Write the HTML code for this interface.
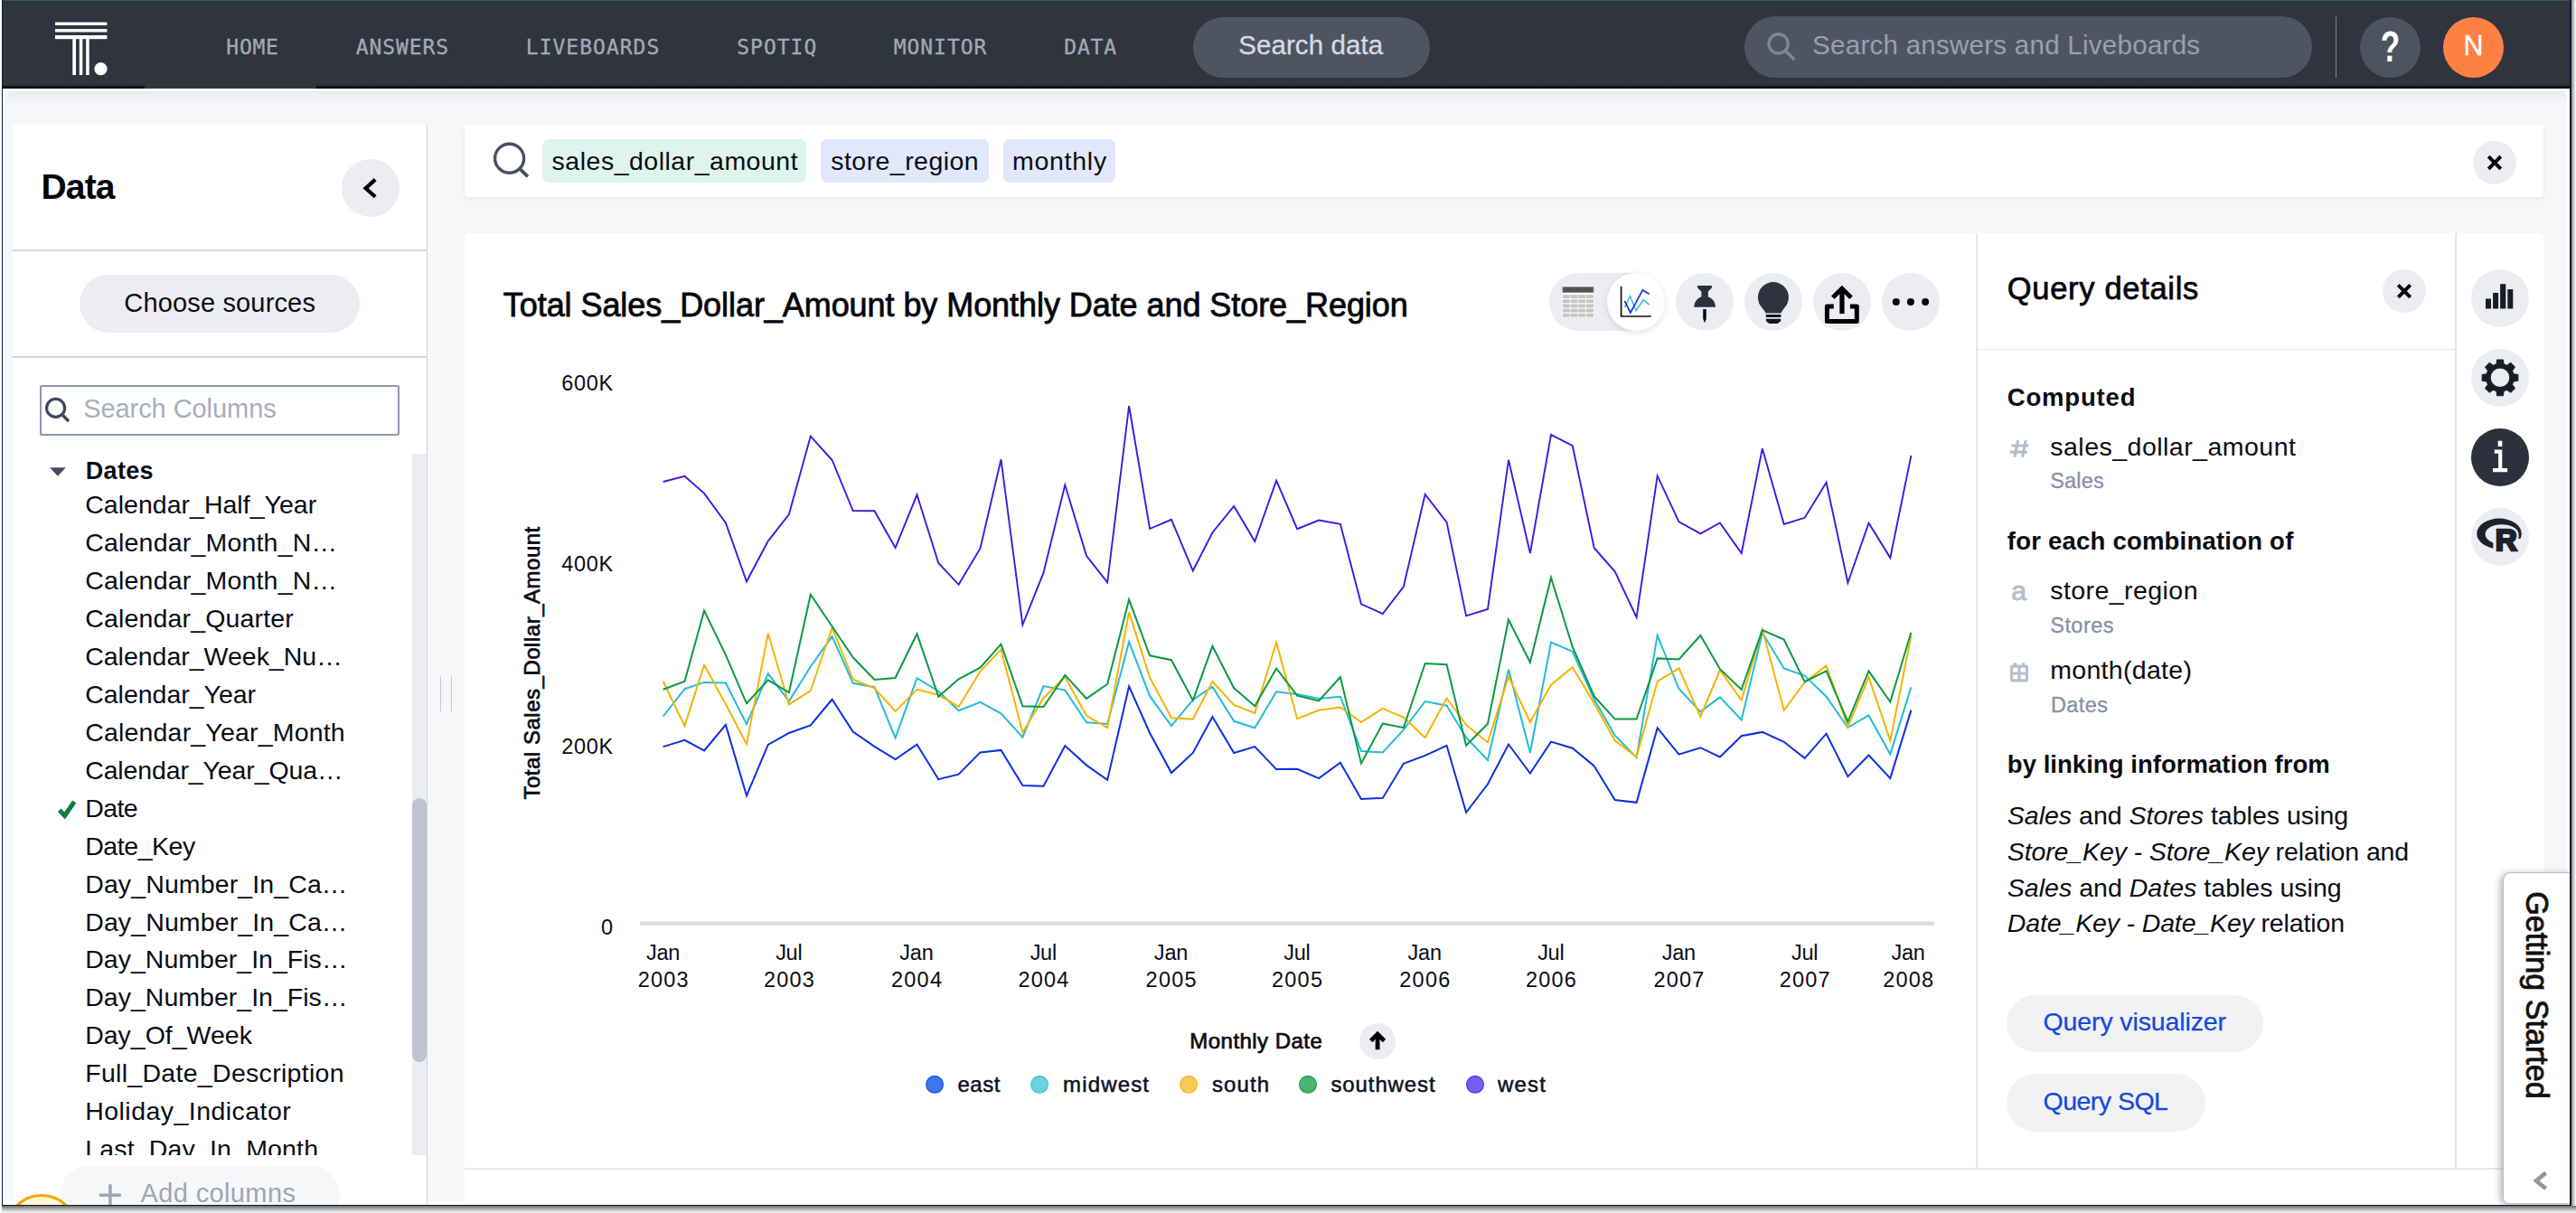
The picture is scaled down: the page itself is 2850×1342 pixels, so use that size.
<!DOCTYPE html>
<html lang="en">
<head>
<meta charset="utf-8">
<title>ThoughtSpot – Search data</title>
<style>
html,body{margin:0;padding:0;background:#fff;}
html{width:2850px;height:1342px;overflow:hidden;}
#root{position:absolute;left:0;top:0;width:2850px;height:1342px;overflow:hidden;background:#fff;}
body{width:2850px;height:1342px;position:relative;overflow:hidden;font-family:"Liberation Sans",Arial,sans-serif;}
.abs,.tx,.c{position:absolute;}
.tx{white-space:pre;line-height:1;}
.c{border-radius:50%;background:#ecedf2;}
#win{left:2px;top:0;width:2841px;height:1333px;background:#fff;border-left:1px solid #0c1a33;border-right:1.5px solid #0c1a33;border-bottom:1.5px solid #0c1a33;box-shadow:1px 3px 7px rgba(0,0,0,.75);overflow:hidden;box-sizing:content-box;}
#nav{left:3px;top:0;width:2841px;height:98px;background:#30343f;}
#navtop{left:3px;top:0;width:2841px;height:1px;background:#3a5262;}
.navline{top:94.2px;height:3.8px;background:linear-gradient(#30343f,#05060c 70%,#000);}
#navshadow{left:6px;top:100.8px;width:2834px;height:16px;border-radius:7px 7px 0 0;background:linear-gradient(#e9eaed,#f1f2f5 40%,#f6f7f9);}
.pill{border-radius:34px;background:#4f5463;}
.card{background:#fff;}
.ln{background:#e4e6ee;}
.btn{background:#ecedf2;border-radius:32px;}
#listclip{left:0;top:0;width:480px;height:1277.6px;overflow:hidden;}
i{font-style:italic;}
</style>
</head>
<body>
<div id="root">
<div id="win" class="abs"></div>

<!-- ======= top navigation ======= -->
<div class="abs" style="left:6px;top:100.8px;width:2834px;height:1229.5px;background:#f6f7f9;border-radius:7px"></div>
<div id="navshadow" class="abs"></div>
<div class="abs" style="left:3px;top:98px;width:2841px;height:2.8px;background:#fff"></div>
<div id="nav" class="abs"></div>
<div id="navtop" class="abs"></div>
<div class="abs navline" style="left:3px;width:157px"></div>
<div class="abs navline" style="left:350px;width:2494px"></div>
<svg class="abs" style="left:0;top:0" width="200" height="98" viewBox="0 0 200 98">
  <g fill="#fff">
    <rect x="61" y="24.6" width="57.4" height="3.4"/>
    <rect x="61" y="32.1" width="57.4" height="3.4"/>
    <rect x="61" y="39" width="57.4" height="4.2"/>
    <rect x="80.3" y="43" width="3.7" height="40"/>
    <rect x="87.8" y="43" width="3.5" height="40"/>
    <rect x="95.1" y="43" width="3.6" height="40"/>
    <circle cx="111.5" cy="76.2" r="7.1"/>
  </g>
</svg>
<div class="abs pill" style="left:1319.7px;top:18.9px;width:262.5px;height:66.9px"></div>
<div class="abs pill" style="left:1929.5px;top:18.4px;width:628.8px;height:67.5px"></div>
<svg class="abs" style="left:1940px;top:25px" width="60" height="60" viewBox="1940 25 60 60">
  <circle cx="1967.6" cy="48.4" r="10.6" fill="none" stroke="#7f8596" stroke-width="3.4"/>
  <line x1="1975.6" y1="56.4" x2="1985.4" y2="66" stroke="#7f8596" stroke-width="3.6"/>
</svg>
<div class="abs" style="left:2583.6px;top:18.4px;width:1.8px;height:67.6px;background:#87817c"></div>
<div class="abs c" style="left:2611px;top:18.9px;width:67px;height:67px;background:#4e5362"></div>
<span class="tx" style="left:2630px;top:28px;width:29px;text-align:center;font-size:47.5px;font-weight:700;color:#fff;transform:scaleX(.74);transform-origin:50% 50%">?</span>
<div class="abs c" style="left:2703px;top:18.9px;width:67px;height:67px;background:#ff8142"></div>

<!-- ======= left data panel ======= -->
<div class="abs card" style="left:14px;top:138px;width:458px;height:1195px;border-radius:4px 0 0 0;border-right:1.5px solid #cfd3de"></div>
<div class="abs c" style="left:378px;top:176px;width:64px;height:64px"></div>
<svg class="abs" style="left:378px;top:176px" width="64" height="64" viewBox="378 176 64 64"><polyline points="415.2,198.6 404.6,208.2 415.2,217.8" fill="none" stroke="#000" stroke-width="4.2"/></svg>
<div class="abs" style="left:14px;top:276px;width:458px;height:1.6px;background:#d3d8e6"></div>
<div class="abs btn" style="left:88px;top:304px;width:310px;height:64px"></div>
<div class="abs" style="left:14px;top:394px;width:458px;height:1.6px;background:#d3d8e6"></div>
<div class="abs" style="left:44.4px;top:426px;width:397.6px;height:55.6px;box-sizing:border-box;border:2.4px solid #8d96aa;background:#fff;border-radius:2px"></div>
<svg class="abs" style="left:46px;top:432px" width="40" height="44" viewBox="46 432 40 44">
  <circle cx="61.6" cy="451.4" r="10" fill="none" stroke="#3f4759" stroke-width="3.2"/>
  <line x1="69" y1="459" x2="76" y2="466" stroke="#3f4759" stroke-width="3.4"/>
</svg>
<svg class="abs" style="left:50px;top:510px" width="40" height="24" viewBox="50 510 40 24"><polygon points="55,517.2 72.8,517.2 63.9,526.7" fill="#454d5f"/></svg>
<div class="abs" style="left:456px;top:502px;width:16px;height:775.6px;background:#ecedf2"></div>
<div class="abs" style="left:456.3px;top:882.8px;width:15.9px;height:292.2px;background:#bfc4d1;border-radius:8px"></div>
<div id="listclip" class="abs">
<span class='tx' style='font-family:"Liberation Sans", Arial, sans-serif;font-size:28.5px;font-weight:400;font-style:normal;color:#0b0c14;letter-spacing:0.022px;left:94.2px;top:544.0px;'>Calendar_Half_Year</span>
<span class='tx' style='font-family:"Liberation Sans", Arial, sans-serif;font-size:28.5px;font-weight:400;font-style:normal;color:#0b0c14;letter-spacing:0.196px;left:94.2px;top:586.0px;'>Calendar_Month_N…</span>
<span class='tx' style='font-family:"Liberation Sans", Arial, sans-serif;font-size:28.5px;font-weight:400;font-style:normal;color:#0b0c14;letter-spacing:0.196px;left:94.2px;top:627.9px;'>Calendar_Month_N…</span>
<span class='tx' style='font-family:"Liberation Sans", Arial, sans-serif;font-size:28.5px;font-weight:400;font-style:normal;color:#0b0c14;letter-spacing:0.164px;left:94.2px;top:669.9px;'>Calendar_Quarter</span>
<span class='tx' style='font-family:"Liberation Sans", Arial, sans-serif;font-size:28.5px;font-weight:400;font-style:normal;color:#0b0c14;letter-spacing:-0.008px;left:94.2px;top:711.8px;'>Calendar_Week_Nu…</span>
<span class='tx' style='font-family:"Liberation Sans", Arial, sans-serif;font-size:28.5px;font-weight:400;font-style:normal;color:#0b0c14;letter-spacing:-0.016px;left:94.2px;top:753.8px;'>Calendar_Year</span>
<span class='tx' style='font-family:"Liberation Sans", Arial, sans-serif;font-size:28.5px;font-weight:400;font-style:normal;color:#0b0c14;letter-spacing:0.186px;left:94.2px;top:795.7px;'>Calendar_Year_Month</span>
<span class='tx' style='font-family:"Liberation Sans", Arial, sans-serif;font-size:28.5px;font-weight:400;font-style:normal;color:#0b0c14;letter-spacing:-0.124px;left:94.2px;top:837.7px;'>Calendar_Year_Qua…</span>
<span class='tx' style='font-family:"Liberation Sans", Arial, sans-serif;font-size:28.5px;font-weight:400;font-style:normal;color:#0b0c14;letter-spacing:-0.601px;left:94.2px;top:879.6px;'>Date</span>
<span class='tx' style='font-family:"Liberation Sans", Arial, sans-serif;font-size:28.5px;font-weight:400;font-style:normal;color:#0b0c14;letter-spacing:-0.439px;left:94.2px;top:921.5px;'>Date_Key</span>
<span class='tx' style='font-family:"Liberation Sans", Arial, sans-serif;font-size:28.5px;font-weight:400;font-style:normal;color:#0b0c14;letter-spacing:0.118px;left:94.2px;top:963.5px;'>Day_Number_In_Ca…</span>
<span class='tx' style='font-family:"Liberation Sans", Arial, sans-serif;font-size:28.5px;font-weight:400;font-style:normal;color:#0b0c14;letter-spacing:0.118px;left:94.2px;top:1005.5px;'>Day_Number_In_Ca…</span>
<span class='tx' style='font-family:"Liberation Sans", Arial, sans-serif;font-size:28.5px;font-weight:400;font-style:normal;color:#0b0c14;letter-spacing:0.020px;left:94.2px;top:1047.4px;'>Day_Number_In_Fis…</span>
<span class='tx' style='font-family:"Liberation Sans", Arial, sans-serif;font-size:28.5px;font-weight:400;font-style:normal;color:#0b0c14;letter-spacing:0.020px;left:94.2px;top:1089.3px;'>Day_Number_In_Fis…</span>
<span class='tx' style='font-family:"Liberation Sans", Arial, sans-serif;font-size:28.5px;font-weight:400;font-style:normal;color:#0b0c14;letter-spacing:-0.011px;left:94.2px;top:1131.3px;'>Day_Of_Week</span>
<span class='tx' style='font-family:"Liberation Sans", Arial, sans-serif;font-size:28.5px;font-weight:400;font-style:normal;color:#0b0c14;letter-spacing:0.300px;left:94.2px;top:1173.2px;'>Full_Date_Description</span>
<span class='tx' style='font-family:"Liberation Sans", Arial, sans-serif;font-size:28.5px;font-weight:400;font-style:normal;color:#0b0c14;letter-spacing:0.461px;left:94.2px;top:1215.2px;'>Holiday_Indicator</span>
<span class='tx' style='font-family:"Liberation Sans", Arial, sans-serif;font-size:28.5px;font-weight:400;font-style:normal;color:#0b0c14;letter-spacing:0.175px;left:94.2px;top:1257.2px;'>Last_Day_In_Month</span>
</div>
<svg class="abs" style="left:60px;top:880px" width="30" height="30" viewBox="60 880 30 30"><polyline points="65.8,896.2 71.6,902.4 82.2,887" fill="none" stroke="#0f7d3c" stroke-width="5"/></svg>
<div class="abs" style="left:66px;top:1290px;width:309.5px;height:64px;border-radius:32px;background:#f6f7f9"></div>
<svg class="abs" style="left:100px;top:1300px" width="50" height="33" viewBox="100 1300 50 33"><path d="M109.9 1322.2H133.9M121.9 1310.2V1334" stroke="#9fa5b2" stroke-width="3.6" fill="none"/></svg>
<div class="abs" style="left:5.8px;top:1321.4px;width:80px;height:80px;box-sizing:border-box;border-radius:50%;border:3px solid #f5a300;background:#fff8d4"></div>
<div class="abs" style="left:486.5px;top:747.8px;width:1.2px;height:39.4px;background:#c3c7d2"></div>
<div class="abs" style="left:498.7px;top:747.8px;width:1.2px;height:39.4px;background:#c3c7d2"></div>

<!-- ======= search bar ======= -->
<div class="abs card" style="left:514px;top:138px;width:2299.5px;height:79.8px;border-radius:4px;box-shadow:0 2px 5px rgba(20,30,60,.06)"></div>
<svg class="abs" style="left:540px;top:150px" width="56" height="56" viewBox="540 150 56 56">
  <circle cx="563.6" cy="175.2" r="16" fill="none" stroke="#475063" stroke-width="3.4"/>
  <line x1="575.2" y1="186.8" x2="584" y2="195.4" stroke="#475063" stroke-width="3.8"/>
</svg>
<div class="abs" style="left:600px;top:154.2px;width:291.9px;height:47.5px;border-radius:7px;background:#def5ec"></div>
<div class="abs" style="left:908px;top:154.2px;width:185.8px;height:47.5px;border-radius:7px;background:#e1e8fb"></div>
<div class="abs" style="left:1110.2px;top:154.2px;width:123.7px;height:47.5px;border-radius:7px;background:#e1e8fb"></div>
<div class="abs c" style="left:2735.8px;top:155.8px;width:48px;height:48px"></div>
<svg class="abs" style="left:2735.8px;top:155.8px" width="48" height="48" viewBox="0 0 48 48"><path d="M17.2 17.2L30.8 30.8M30.8 17.2L17.2 30.8" stroke="#000" stroke-width="4" fill="none"/></svg>

<!-- ======= answer card ======= -->
<div class="abs card" style="left:514px;top:258px;width:2299.5px;height:1075px;border-radius:4px 4px 0 0"></div>
<div class="abs ln" style="left:2186.3px;top:258px;width:1.6px;height:1035px"></div>
<div class="abs ln" style="left:2716.2px;top:258px;width:1.6px;height:1035px"></div>
<div class="abs ln" style="left:2187px;top:385.8px;width:530px;height:1.6px"></div>
<div class="abs ln" style="left:514px;top:1292px;width:2299.5px;height:1.6px"></div>

<!-- view toggle + actions -->
<div class="abs btn" style="left:1714px;top:302px;width:127px;height:64px"></div>
<div class="abs c" style="left:1777.8px;top:302px;width:64px;height:64px;background:#fff;box-shadow:0 2px 7px rgba(60,70,100,.16)"></div>
<div class="abs c" style="left:1853.9px;top:302px;width:64px;height:64px"></div>
<div class="abs c" style="left:1930px;top:302px;width:64px;height:64px"></div>
<div class="abs c" style="left:2005.8px;top:302px;width:64px;height:64px"></div>
<div class="abs c" style="left:2081.9px;top:302px;width:64px;height:64px"></div>
<svg class="abs" style="left:1714px;top:302px" width="440" height="64" viewBox="1714 302 440 64">
  <!-- table icon -->
  <rect x="1728.2" y="316.2" width="35.5" height="35" fill="#fff" opacity=".9"/>
  <rect x="1728.9" y="317.4" width="34.1" height="6.2" fill="#545454" stroke="#8a8a8a" stroke-width=".8"/>
  <g fill="#c5c4c2">
    <rect x="1728.9" y="326.2" width="7.9" height="3.9"/><rect x="1737.6" y="326.2" width="7.9" height="3.9"/><rect x="1746.3" y="326.2" width="7.9" height="3.9"/><rect x="1755" y="326.2" width="8" height="3.9"/>
    <rect x="1728.9" y="331.35" width="7.9" height="3.9"/><rect x="1737.6" y="331.35" width="7.9" height="3.9"/><rect x="1746.3" y="331.35" width="7.9" height="3.9"/><rect x="1755" y="331.35" width="8" height="3.9"/>
    <rect x="1728.9" y="336.5" width="7.9" height="3.9"/><rect x="1737.6" y="336.5" width="7.9" height="3.9"/><rect x="1746.3" y="336.5" width="7.9" height="3.9"/><rect x="1755" y="336.5" width="8" height="3.9"/>
    <rect x="1728.9" y="341.65" width="7.9" height="3.9"/><rect x="1737.6" y="341.65" width="7.9" height="3.9"/><rect x="1746.3" y="341.65" width="7.9" height="3.9"/><rect x="1755" y="341.65" width="8" height="3.9"/>
    <rect x="1728.9" y="346.8" width="7.9" height="3.9"/><rect x="1737.6" y="346.8" width="7.9" height="3.9"/><rect x="1746.3" y="346.8" width="7.9" height="3.9"/><rect x="1755" y="346.8" width="8" height="3.9"/>
  </g>
  <!-- line chart icon -->
  <path d="M1793.6 317V350H1826.8" fill="none" stroke="#0a0c1c" stroke-width="1.7"/>
  <polyline points="1797.4,340 1803.5,327.8 1810,343.7 1818.3,331.7 1824.6,337.2" fill="none" stroke="#2cc4d8" stroke-width="1.6"/>
  <polyline points="1797.4,332.8 1803.9,345.9 1817.4,320.9 1824.6,325.2" fill="none" stroke="#1230e0" stroke-width="1.7"/>
  <!-- pin -->
  <g fill="#2b2f3b">
    <path d="M1877.9 316H1894V317.6C1893.4 320.6 1889.8 321 1889.8 323.8V328.2A11.9 12.2 0 0 1 1898 339.7H1874.2A11.9 12.2 0 0 1 1882.4 328.2V323.8C1882.4 321 1878.5 320.6 1877.9 317.6Z"/>
    <path fill="#0c0d14" d="M1884.2 341.9H1887.8V352.7L1886 357.2L1884.2 352.7Z"/>
  </g>
  <!-- bulb -->
  <g fill="#2f3340">
    <circle cx="1961.9" cy="329.1" r="17"/>
    <path d="M1949.6 340H1974.2L1970.3 346.5H1953.6Z"/>
    <rect fill="#14161f" x="1953.7" y="348.1" width="16.7" height="3" rx=".5"/>
    <path fill="#14161f" d="M1953.9 352.7H1970.2V355.3L1966.6 358H1957.4L1953.9 355.3Z"/>
  </g>
  <!-- share -->
  <g fill="none" stroke="#000">
    <path d="M2028.8 339.1H2021.4V355.6H2054.3V339.1H2046.9" stroke-width="5" stroke-linejoin="round"/>
    <path d="M2037.95 347.1V319.5" stroke-width="5.3"/>
    <path d="M2027.75 329.25L2037.9 319.2L2048.05 329.25" stroke-width="5" stroke-linejoin="miter"/>
  </g>
  <!-- more -->
  <g fill="#05060e"><circle cx="2097.8" cy="334.1" r="4"/><circle cx="2113.9" cy="334.1" r="4"/><circle cx="2130.1" cy="334.1" r="4"/></g>
</svg>

<!-- chart -->
<svg class="abs" style="left:514px;top:390px" width="1672" height="880" viewBox="514 390 1672 880">
<rect x="708" y="1019.5" width="1432.2" height="4.3" fill="#dcdcdc"/><polyline points="733.7,826.1 757.5,818.8 779.1,830.4 802.9,801.9 826.0,880.4 849.8,823.9 872.9,811.0 896.8,802.5 920.6,773.8 943.7,809.6 967.5,825.9 990.6,840.1 1014.5,823.7 1038.3,862.2 1060.6,856.6 1084.5,832.4 1107.5,829.9 1131.4,869.1 1154.5,869.8 1178.3,825.0 1202.1,846.6 1225.2,862.9 1249.1,759.3 1272.1,811.0 1296.0,855.1 1319.8,833.0 1341.4,793.0 1365.2,833.0 1388.3,826.1 1412.1,851.1 1435.2,850.8 1459.1,861.1 1482.9,843.7 1506.0,884.0 1529.8,882.9 1552.9,844.8 1576.7,835.9 1600.6,824.8 1622.1,898.9 1646.0,867.5 1669.0,823.5 1692.9,855.5 1716.0,820.6 1739.8,827.7 1763.7,847.5 1786.7,885.1 1810.6,887.8 1833.7,805.4 1857.5,834.6 1881.3,827.2 1902.9,837.5 1926.7,814.3 1949.8,809.9 1973.7,820.8 1996.7,838.8 2020.6,811.7 2044.4,859.1 2067.5,835.5 2091.3,861.1 2114.4,785.6" fill="none" stroke="#0b2fe3" stroke-width="2.0" stroke-linejoin="miter" stroke-linecap="butt"/><polyline points="733.7,792.5 757.5,762.2 779.1,754.9 802.9,755.5 826.0,801.2 849.8,745.3 872.9,775.8 896.8,737.5 920.6,704.1 943.7,755.8 967.5,760.2 990.6,816.5 1014.5,750.2 1038.3,764.7 1060.6,786.3 1084.5,776.9 1107.5,789.4 1131.4,815.7 1154.5,759.1 1178.3,763.6 1202.1,799.2 1225.2,801.0 1249.1,710.1 1272.1,770.2 1296.0,803.2 1319.8,774.2 1341.4,759.8 1365.2,797.8 1388.3,805.2 1412.1,765.3 1435.2,768.0 1459.1,773.1 1482.9,770.7 1506.0,831.0 1529.8,832.4 1552.9,807.4 1576.7,776.0 1600.6,780.7 1622.1,815.9 1646.0,841.0 1669.0,740.6 1692.9,832.8 1716.0,710.6 1739.8,720.8 1763.7,773.6 1786.7,813.7 1810.6,838.1 1833.7,703.0 1857.5,762.0 1881.3,787.4 1902.9,771.4 1926.7,796.5 1949.8,700.1 1973.7,739.5 1996.7,747.5 2020.6,770.7 2044.4,805.0 2067.5,791.4 2091.3,834.4 2114.4,760.2" fill="none" stroke="#21bcd8" stroke-width="2.0" stroke-linejoin="miter" stroke-linecap="butt"/><polyline points="733.7,753.8 757.5,803.2 779.1,735.7 802.9,779.1 826.0,823.2 849.8,700.8 872.9,779.4 896.8,764.2 920.6,694.5 943.7,751.8 967.5,761.3 990.6,786.9 1014.5,762.9 1038.3,768.7 1060.6,781.8 1084.5,742.9 1107.5,718.4 1131.4,810.3 1154.5,772.2 1178.3,749.1 1202.1,791.8 1225.2,805.2 1249.1,677.4 1272.1,749.5 1296.0,794.3 1319.8,795.6 1341.4,754.0 1365.2,780.0 1388.3,788.9 1412.1,710.8 1435.2,795.2 1459.1,785.8 1482.9,782.5 1506.0,799.0 1529.8,783.8 1552.9,793.6 1576.7,816.1 1600.6,772.5 1622.1,801.9 1646.0,821.4 1669.0,748.4 1692.9,799.0 1716.0,757.6 1739.8,738.2 1763.7,778.0 1786.7,819.4 1810.6,837.3 1833.7,754.0 1857.5,739.3 1881.3,793.0 1902.9,741.3 1926.7,774.7 1949.8,696.1 1973.7,785.8 1996.7,754.7 2020.6,736.6 2044.4,804.1 2067.5,749.1 2091.3,819.4 2114.4,703.4" fill="none" stroke="#f5b400" stroke-width="2.0" stroke-linejoin="miter" stroke-linecap="butt"/><polyline points="733.7,762.7 757.5,753.8 779.1,675.6 802.9,724.6 826.0,778.3 849.8,752.4 872.9,766.2 896.8,657.8 920.6,693.0 943.7,727.3 967.5,752.0 990.6,750.0 1014.5,701.2 1038.3,770.7 1060.6,751.3 1084.5,738.6 1107.5,712.6 1131.4,781.2 1154.5,782.0 1178.3,746.9 1202.1,772.9 1225.2,756.7 1249.1,663.4 1272.1,725.3 1296.0,730.2 1319.8,774.9 1341.4,714.8 1365.2,761.3 1388.3,781.2 1412.1,739.5 1435.2,769.6 1459.1,775.4 1482.9,749.1 1506.0,844.4 1529.8,800.5 1552.9,805.2 1576.7,734.0 1600.6,735.3 1622.1,824.8 1646.0,800.7 1669.0,685.6 1692.9,732.8 1716.0,639.0 1739.8,715.7 1763.7,770.2 1786.7,795.6 1810.6,795.6 1833.7,728.4 1857.5,729.5 1881.3,703.0 1902.9,740.2 1926.7,762.9 1949.8,697.2 1973.7,707.5 1996.7,754.2 2020.6,742.4 2044.4,798.5 2067.5,742.4 2091.3,776.5 2114.4,699.7" fill="none" stroke="#0a9a43" stroke-width="2.0" stroke-linejoin="miter" stroke-linecap="butt"/><polyline points="733.7,533.0 757.5,526.9 779.1,545.9 802.9,578.5 826.0,643.3 849.8,598.6 872.9,569.0 896.8,482.6 920.6,509.0 943.7,565.0 967.5,565.2 990.6,606.0 1014.5,547.4 1038.3,623.0 1060.6,646.8 1084.5,606.7 1107.5,508.3 1131.4,691.3 1154.5,633.7 1178.3,536.5 1202.1,615.1 1225.2,644.3 1249.1,449.0 1272.1,585.0 1296.0,574.8 1319.8,631.5 1341.4,589.2 1365.2,560.0 1388.3,599.0 1412.1,531.6 1435.2,585.2 1459.1,575.6 1482.9,579.8 1506.0,668.3 1529.8,679.0 1552.9,649.0 1576.7,546.9 1600.6,577.8 1622.1,681.4 1646.0,674.0 1669.0,508.8 1692.9,612.0 1716.0,480.9 1739.8,493.2 1763.7,606.2 1786.7,632.4 1810.6,682.9 1833.7,526.4 1857.5,577.3 1881.3,590.4 1902.9,578.5 1926.7,612.1 1949.8,496.2 1973.7,580.0 1996.7,572.8 2020.6,533.8 2044.4,644.8 2067.5,578.8 2091.3,617.1 2114.4,503.9" fill="none" stroke="#4316e6" stroke-width="1.9" stroke-linejoin="miter" stroke-linecap="butt"/><text x="678.2" y="432" text-anchor="end" font-size="23.5" fill="#0b0c14" style="font-family:&quot;Liberation Sans&quot;,Arial,sans-serif;" textLength="57" lengthAdjust="spacing">600K</text><text x="678.2" y="632" text-anchor="end" font-size="23.5" fill="#0b0c14" style="font-family:&quot;Liberation Sans&quot;,Arial,sans-serif;" textLength="57" lengthAdjust="spacing">400K</text><text x="678.2" y="833.5" text-anchor="end" font-size="23.5" fill="#0b0c14" style="font-family:&quot;Liberation Sans&quot;,Arial,sans-serif;" textLength="57" lengthAdjust="spacing">200K</text><text x="678.2" y="1033.5" text-anchor="end" font-size="23.5" fill="#0b0c14" style="font-family:&quot;Liberation Sans&quot;,Arial,sans-serif;">0</text><text x="733.7" y="1061.9" text-anchor="middle" font-size="23.5" fill="#0b0c14" style="font-family:&quot;Liberation Sans&quot;,Arial,sans-serif;" textLength="37.5" lengthAdjust="spacing">Jan</text><text x="733.7" y="1092.1" text-anchor="middle" font-size="23.5" fill="#0b0c14" style="font-family:&quot;Liberation Sans&quot;,Arial,sans-serif;" textLength="56" lengthAdjust="spacing">2003</text><text x="872.9" y="1061.9" text-anchor="middle" font-size="23.5" fill="#0b0c14" style="font-family:&quot;Liberation Sans&quot;,Arial,sans-serif;" textLength="29.5" lengthAdjust="spacing">Jul</text><text x="872.9" y="1092.1" text-anchor="middle" font-size="23.5" fill="#0b0c14" style="font-family:&quot;Liberation Sans&quot;,Arial,sans-serif;" textLength="56" lengthAdjust="spacing">2003</text><text x="1014" y="1061.9" text-anchor="middle" font-size="23.5" fill="#0b0c14" style="font-family:&quot;Liberation Sans&quot;,Arial,sans-serif;" textLength="37.5" lengthAdjust="spacing">Jan</text><text x="1014" y="1092.1" text-anchor="middle" font-size="23.5" fill="#0b0c14" style="font-family:&quot;Liberation Sans&quot;,Arial,sans-serif;" textLength="56" lengthAdjust="spacing">2004</text><text x="1154.4" y="1061.9" text-anchor="middle" font-size="23.5" fill="#0b0c14" style="font-family:&quot;Liberation Sans&quot;,Arial,sans-serif;" textLength="29.5" lengthAdjust="spacing">Jul</text><text x="1154.4" y="1092.1" text-anchor="middle" font-size="23.5" fill="#0b0c14" style="font-family:&quot;Liberation Sans&quot;,Arial,sans-serif;" textLength="56" lengthAdjust="spacing">2004</text><text x="1295.6" y="1061.9" text-anchor="middle" font-size="23.5" fill="#0b0c14" style="font-family:&quot;Liberation Sans&quot;,Arial,sans-serif;" textLength="37.5" lengthAdjust="spacing">Jan</text><text x="1295.6" y="1092.1" text-anchor="middle" font-size="23.5" fill="#0b0c14" style="font-family:&quot;Liberation Sans&quot;,Arial,sans-serif;" textLength="56" lengthAdjust="spacing">2005</text><text x="1435" y="1061.9" text-anchor="middle" font-size="23.5" fill="#0b0c14" style="font-family:&quot;Liberation Sans&quot;,Arial,sans-serif;" textLength="29.5" lengthAdjust="spacing">Jul</text><text x="1435" y="1092.1" text-anchor="middle" font-size="23.5" fill="#0b0c14" style="font-family:&quot;Liberation Sans&quot;,Arial,sans-serif;" textLength="56" lengthAdjust="spacing">2005</text><text x="1576.3" y="1061.9" text-anchor="middle" font-size="23.5" fill="#0b0c14" style="font-family:&quot;Liberation Sans&quot;,Arial,sans-serif;" textLength="37.5" lengthAdjust="spacing">Jan</text><text x="1576.3" y="1092.1" text-anchor="middle" font-size="23.5" fill="#0b0c14" style="font-family:&quot;Liberation Sans&quot;,Arial,sans-serif;" textLength="56" lengthAdjust="spacing">2006</text><text x="1715.9" y="1061.9" text-anchor="middle" font-size="23.5" fill="#0b0c14" style="font-family:&quot;Liberation Sans&quot;,Arial,sans-serif;" textLength="29.5" lengthAdjust="spacing">Jul</text><text x="1715.9" y="1092.1" text-anchor="middle" font-size="23.5" fill="#0b0c14" style="font-family:&quot;Liberation Sans&quot;,Arial,sans-serif;" textLength="56" lengthAdjust="spacing">2006</text><text x="1857.4" y="1061.9" text-anchor="middle" font-size="23.5" fill="#0b0c14" style="font-family:&quot;Liberation Sans&quot;,Arial,sans-serif;" textLength="37.5" lengthAdjust="spacing">Jan</text><text x="1857.4" y="1092.1" text-anchor="middle" font-size="23.5" fill="#0b0c14" style="font-family:&quot;Liberation Sans&quot;,Arial,sans-serif;" textLength="56" lengthAdjust="spacing">2007</text><text x="1996.7" y="1061.9" text-anchor="middle" font-size="23.5" fill="#0b0c14" style="font-family:&quot;Liberation Sans&quot;,Arial,sans-serif;" textLength="29.5" lengthAdjust="spacing">Jul</text><text x="1996.7" y="1092.1" text-anchor="middle" font-size="23.5" fill="#0b0c14" style="font-family:&quot;Liberation Sans&quot;,Arial,sans-serif;" textLength="56" lengthAdjust="spacing">2007</text><text x="2111.2" y="1061.9" text-anchor="middle" font-size="23.5" fill="#0b0c14" style="font-family:&quot;Liberation Sans&quot;,Arial,sans-serif;" textLength="37.5" lengthAdjust="spacing">Jan</text><text x="2111.2" y="1092.1" text-anchor="middle" font-size="23.5" fill="#0b0c14" style="font-family:&quot;Liberation Sans&quot;,Arial,sans-serif;" textLength="56" lengthAdjust="spacing">2008</text><text transform="translate(596.5,733.6) rotate(-90)" text-anchor="middle" font-size="24" fill="#0b0c14" stroke="#0b0c14" stroke-width="0.7" style="font-family:&quot;Liberation Sans&quot;,Arial,sans-serif;" textLength="301.8" lengthAdjust="spacing">Total Sales_Dollar_Amount</text><text x="1316.3" y="1159.5" font-size="24" fill="#0b0c14" stroke="#0b0c14" stroke-width="0.7" style="font-family:&quot;Liberation Sans&quot;,Arial,sans-serif;" textLength="146.5" lengthAdjust="spacing">Monthly Date</text><circle cx="1034.1" cy="1199.8" r="9.3" fill="#4076ea" stroke="#1f58ee" stroke-width="1.5"/><text x="1059.5" y="1207.9" font-size="24" fill="#0d1024" stroke="#0d1024" stroke-width="0.5" style="font-family:&quot;Liberation Sans&quot;,Arial,sans-serif;" textLength="46.8" lengthAdjust="spacing">east</text><circle cx="1150.1" cy="1199.8" r="9.3" fill="#6fd1dd" stroke="#48c6da" stroke-width="1.5"/><text x="1176" y="1207.9" font-size="24" fill="#0d1024" stroke="#0d1024" stroke-width="0.5" style="font-family:&quot;Liberation Sans&quot;,Arial,sans-serif;" textLength="95" lengthAdjust="spacing">midwest</text><circle cx="1315.1" cy="1199.8" r="9.3" fill="#f8cb58" stroke="#f5bd2c" stroke-width="1.5"/><text x="1341" y="1207.9" font-size="24" fill="#0d1024" stroke="#0d1024" stroke-width="0.5" style="font-family:&quot;Liberation Sans&quot;,Arial,sans-serif;" textLength="63" lengthAdjust="spacing">south</text><circle cx="1447" cy="1199.8" r="9.3" fill="#48b572" stroke="#22a553" stroke-width="1.5"/><text x="1472.5" y="1207.9" font-size="24" fill="#0d1024" stroke="#0d1024" stroke-width="0.5" style="font-family:&quot;Liberation Sans&quot;,Arial,sans-serif;" textLength="115.1" lengthAdjust="spacing">southwest</text><circle cx="1632" cy="1199.8" r="9.3" fill="#775cf0" stroke="#5a3cee" stroke-width="1.5"/><text x="1657" y="1207.9" font-size="24" fill="#0d1024" stroke="#0d1024" stroke-width="0.5" style="font-family:&quot;Liberation Sans&quot;,Arial,sans-serif;" textLength="52.8" lengthAdjust="spacing">west</text>
</svg>
<div class="abs c" style="left:1503.9px;top:1132.3px;width:40px;height:40px"></div>
<svg class="abs" style="left:1503.9px;top:1132.3px" width="40" height="40" viewBox="0 0 40 40"><path d="M20.1 29.3V13M12.7 19.5L20.1 12.1L27.5 19.5" fill="none" stroke="#000" stroke-width="4.8"/></svg>

<!-- ======= query details ======= -->
<div class="abs c" style="left:2635.7px;top:298px;width:48px;height:48px"></div>
<svg class="abs" style="left:2635.7px;top:298px" width="48" height="48" viewBox="0 0 48 48"><path d="M17.3 17.4L30.7 30.8M30.7 17.4L17.3 30.8" stroke="#05060e" stroke-width="4" fill="none"/></svg>
<svg class="abs" style="left:2215px;top:470px" width="50" height="300" viewBox="2215 470 50 300">
  <g fill="none" stroke="#b7bdcb" stroke-width="3.2">
    <path d="M2232.6 487.2L2229 505.8M2241.2 487.2L2237.6 505.8M2225.4 493H2244.4M2224 500.1H2243"/>
  </g>
  <g fill="none" stroke="#b7bdcb" stroke-width="3.2">
    <rect x="2225.6" y="737.2" width="16.8" height="15.6" rx="1"/>
    <path d="M2225.6 745H2242.4M2234 737.4V752.8M2229.4 733.2V737.4M2238.6 733.2V737.4"/>
  </g>
</svg>
<span class="tx" style="left:2225.2px;top:639.4px;font-size:30px;font-weight:400;color:#b7bdcb;-webkit-text-stroke:1px #b7bdcb">a</span>
<div class="abs" style="left:2220px;top:1100.5px;width:284px;height:63.6px;border-radius:32px;background:#f2f2f4"></div>
<div class="abs" style="left:2220px;top:1188px;width:219.7px;height:63.6px;border-radius:32px;background:#f2f2f4"></div>

<!-- ======= right icon rail ======= -->
<div class="abs c" style="left:2733.9px;top:297.6px;width:64px;height:64px"></div>
<div class="abs c" style="left:2733.9px;top:385.8px;width:64px;height:64px"></div>
<div class="abs c" style="left:2733.9px;top:473.7px;width:64px;height:64px;background:#2d313e"></div>
<div class="abs c" style="left:2733.9px;top:562px;width:64px;height:64px"></div>
<svg class="abs" style="left:2733.9px;top:297px" width="64" height="330" viewBox="2733.9 297 64 330">
  <g fill="#191b25">
    <rect x="2749.9" y="330.5" width="6" height="11"/><rect x="2758" y="324" width="6" height="17.5"/><rect x="2766" y="314.2" width="6.2" height="27.3"/><rect x="2774.2" y="320.1" width="6" height="21.4"/>
    <path fill-rule="evenodd" stroke="#20232e" stroke-width="1.3" stroke-linejoin="round" d="M2785.63 414.52 L2785.63 421.08 L2780.79 421.75 L2779.22 425.53 L2782.17 429.43 L2777.53 434.07 L2773.63 431.12 L2769.85 432.69 L2769.18 437.53 L2762.62 437.53 L2761.95 432.69 L2758.17 431.12 L2754.27 434.07 L2749.63 429.43 L2752.58 425.53 L2751.01 421.75 L2746.17 421.08 L2746.17 414.52 L2751.01 413.85 L2752.58 410.07 L2749.63 406.17 L2754.27 401.53 L2758.17 404.48 L2761.95 402.91 L2762.62 398.07 L2769.18 398.07 L2769.85 402.91 L2773.63 404.48 L2777.53 401.53 L2782.17 406.17 L2779.22 410.07 L2780.79 413.85Z M2776.80 417.80 A10.9 10.9 0 1 0 2755.00 417.80 A10.9 10.9 0 1 0 2776.80 417.80Z"/>
  </g>
  <g fill="#fff">
    <rect x="2763.6" y="487.7" width="4.6" height="6.3"/>
    <path d="M2759.7 497.5H2768.2V518H2774V522.2H2757.9V518H2764V501.7H2759.7Z"/>
  </g>
  <path fill="#1e222d" fill-rule="evenodd" d="M2740.1 590.4a24.8 16.8 0 1 0 49.6 0a24.8 16.8 0 1 0 -49.6 0Z M2749.5 591.1a18.2 10.9 0 1 0 36.4 0a18.2 10.9 0 1 0 -36.4 0Z"/>
  <path fill="#ecedf2" d="M2758.3 596H2792V612H2758.3Z"/>
  <text x="2760.6" y="609.4" font-size="33.3" font-weight="700" fill="#ecedf2" stroke="#ecedf2" stroke-width="7" stroke-linejoin="round" style="font-family:&quot;Liberation Sans&quot;,Arial,sans-serif">R</text>
  <text x="2760.6" y="609.4" font-size="33.3" font-weight="700" fill="#1e222d" stroke="#1e222d" stroke-width="2.6" stroke-linejoin="miter" style="font-family:&quot;Liberation Sans&quot;,Arial,sans-serif">R</text>
</svg>

<!-- ======= getting started tab ======= -->
<div class="abs" style="left:2769.2px;top:964.5px;width:77px;height:367.5px;box-sizing:border-box;background:#fff;border:1.3px solid #bdbdbd;border-radius:9px 0 0 7px;box-shadow:-3px 1px 7px rgba(0,0,0,.28)"></div>
<span class="tx" style="left:2660px;top:1083px;width:294px;height:36px;text-align:center;font-weight:400;-webkit-text-stroke:.85px #111;font-size:35px;letter-spacing:0;color:#111;transform:rotate(90deg) scaleX(.975);transform-origin:50% 50%">Getting Started</span>
<svg class="abs" style="left:2796px;top:1292px" width="30" height="30" viewBox="2796 1292 30 30"><polyline points="2816.6,1297.6 2806,1306.3 2816.6,1315" fill="none" stroke="#93969e" stroke-width="4.6"/></svg>

<!-- ======= window frame (right/bottom edge over content) ======= -->
<div class="abs" style="left:2843.2px;top:0;width:1.6px;height:1334px;background:#0c1a33"></div>
<div class="abs" style="left:2845px;top:0;width:5px;height:1342px;background:linear-gradient(90deg,#8f8f8f,#fff)"></div>
<div class="abs" style="left:2px;top:1333px;width:2843px;height:1.4px;background:#0c1a33"></div>
<div class="abs" style="left:0;top:1334.4px;width:2850px;height:8px;background:linear-gradient(#6a6a6a,#c9c9c9 60%,#f4f4f4)"></div>
<div class="abs" style="left:0;top:0;width:2px;height:1342px;background:#fff"></div>

<span class='tx' style='font-family:"DejaVu Sans Mono", "Liberation Mono", monospace;font-size:23px;font-weight:400;font-style:normal;color:#a3a9b9;-webkit-text-stroke:0.3px #a3a9b9;letter-spacing:0.736px;left:250.3px;top:41.3px;'>HOME</span>
<span class='tx' style='font-family:"DejaVu Sans Mono", "Liberation Mono", monospace;font-size:23px;font-weight:400;font-style:normal;color:#a3a9b9;-webkit-text-stroke:0.3px #a3a9b9;letter-spacing:0.910px;left:393.8px;top:41.3px;'>ANSWERS</span>
<span class='tx' style='font-family:"DejaVu Sans Mono", "Liberation Mono", monospace;font-size:23px;font-weight:400;font-style:normal;color:#a3a9b9;-webkit-text-stroke:0.3px #a3a9b9;letter-spacing:1.002px;left:581.8px;top:41.3px;'>LIVEBOARDS</span>
<span class='tx' style='font-family:"DejaVu Sans Mono", "Liberation Mono", monospace;font-size:23px;font-weight:400;font-style:normal;color:#a3a9b9;-webkit-text-stroke:0.3px #a3a9b9;letter-spacing:1.001px;left:815.2px;top:41.3px;'>SPOTIQ</span>
<span class='tx' style='font-family:"DejaVu Sans Mono", "Liberation Mono", monospace;font-size:23px;font-weight:400;font-style:normal;color:#a3a9b9;-webkit-text-stroke:0.3px #a3a9b9;letter-spacing:0.960px;left:988.7px;top:41.3px;'>MONITOR</span>
<span class='tx' style='font-family:"DejaVu Sans Mono", "Liberation Mono", monospace;font-size:23px;font-weight:400;font-style:normal;color:#a3a9b9;-webkit-text-stroke:0.3px #a3a9b9;letter-spacing:0.870px;left:1177.2px;top:41.3px;'>DATA</span>
<span class='tx' style='font-family:"Liberation Sans", Arial, sans-serif;font-size:29.5px;font-weight:400;font-style:normal;color:#d7dae2;-webkit-text-stroke:0.3px #d7dae2;letter-spacing:0.091px;left:1370.2px;top:35.3px;'>Search data</span>
<span class='tx' style='font-family:"Liberation Sans", Arial, sans-serif;font-size:29.5px;font-weight:400;font-style:normal;color:#9aa0af;letter-spacing:0.270px;left:2005.1px;top:35.1px;'>Search answers and Liveboards</span>
<span class='tx' style='font-family:"Liberation Sans", Arial, sans-serif;font-size:30.5px;font-weight:400;font-style:normal;color:#fff;-webkit-text-stroke:0.3px #fff;letter-spacing:0.000px;left:2725.5px;top:34.5px;'>N</span>
<span class='tx' style='font-family:"Liberation Sans", Arial, sans-serif;font-size:39px;font-weight:700;font-style:normal;color:#05060c;letter-spacing:-0.849px;left:45.5px;top:187.2px;'>Data</span>
<span class='tx' style='font-family:"Liberation Sans", Arial, sans-serif;font-size:29px;font-weight:400;font-style:normal;color:#0b0c14;letter-spacing:0.157px;left:137.3px;top:320.6px;'>Choose sources</span>
<span class='tx' style='font-family:"Liberation Sans", Arial, sans-serif;font-size:29px;font-weight:400;font-style:normal;color:#a7aebd;letter-spacing:-0.067px;left:92.2px;top:438.2px;'>Search Columns</span>
<span class='tx' style='font-family:"Liberation Sans", Arial, sans-serif;font-size:27px;font-weight:700;font-style:normal;color:#0b0c14;letter-spacing:0.288px;left:94.8px;top:507.7px;'>Dates</span>
<span class='tx' style='font-family:"Liberation Sans", Arial, sans-serif;font-size:29px;font-weight:400;font-style:normal;color:#9fa5b2;letter-spacing:0.374px;left:155.5px;top:1305.6px;'>Add columns</span>
<span class='tx' style='font-family:"Liberation Sans", Arial, sans-serif;font-size:28.5px;font-weight:400;font-style:normal;color:#0b0c14;letter-spacing:0.500px;left:610.6px;top:163.7px;'>sales_dollar_amount</span>
<span class='tx' style='font-family:"Liberation Sans", Arial, sans-serif;font-size:28.5px;font-weight:400;font-style:normal;color:#0b0c14;letter-spacing:0.442px;left:919.3px;top:163.7px;'>store_region</span>
<span class='tx' style='font-family:"Liberation Sans", Arial, sans-serif;font-size:28.5px;font-weight:400;font-style:normal;color:#0b0c14;letter-spacing:0.751px;left:1119.9px;top:163.7px;'>monthly</span>
<span class='tx' style='font-family:"Liberation Sans", Arial, sans-serif;font-size:36px;font-weight:400;font-style:normal;color:#05060c;-webkit-text-stroke:0.8px #05060c;letter-spacing:-0.063px;left:556.8px;top:320.0px;'>Total Sales_Dollar_Amount by Monthly Date and Store_Region</span>
<span class='tx' style='font-family:"Liberation Sans", Arial, sans-serif;font-size:34.5px;font-weight:400;font-style:normal;color:#05060c;-webkit-text-stroke:0.75px #05060c;letter-spacing:0.686px;left:2220.8px;top:301.9px;'>Query details</span>
<span class='tx' style='font-family:"Liberation Sans", Arial, sans-serif;font-size:27.5px;font-weight:700;font-style:normal;color:#0b0c14;letter-spacing:0.819px;left:2220.8px;top:425.5px;'>Computed</span>
<span class='tx' style='font-family:"Liberation Sans", Arial, sans-serif;font-size:28.5px;font-weight:400;font-style:normal;color:#0b0c14;letter-spacing:0.478px;left:2268.3px;top:479.8px;'>sales_dollar_amount</span>
<span class='tx' style='font-family:"Liberation Sans", Arial, sans-serif;font-size:23.5px;font-weight:400;font-style:normal;color:#8791a7;-webkit-text-stroke:0.3px #8791a7;letter-spacing:0.151px;left:2268.3px;top:521.3px;'>Sales</span>
<span class='tx' style='font-family:"Liberation Sans", Arial, sans-serif;font-size:27.5px;font-weight:700;font-style:normal;color:#0b0c14;letter-spacing:0.219px;left:2220.8px;top:585.0px;'>for each combination of</span>
<span class='tx' style='font-family:"Liberation Sans", Arial, sans-serif;font-size:28.5px;font-weight:400;font-style:normal;color:#0b0c14;letter-spacing:0.433px;left:2268.3px;top:639.0px;'>store_region</span>
<span class='tx' style='font-family:"Liberation Sans", Arial, sans-serif;font-size:23.5px;font-weight:400;font-style:normal;color:#8791a7;-webkit-text-stroke:0.3px #8791a7;letter-spacing:0.436px;left:2268.3px;top:681.0px;'>Stores</span>
<span class='tx' style='font-family:"Liberation Sans", Arial, sans-serif;font-size:28.5px;font-weight:400;font-style:normal;color:#0b0c14;letter-spacing:0.293px;left:2268.3px;top:727.2px;'>month(date)</span>
<span class='tx' style='font-family:"Liberation Sans", Arial, sans-serif;font-size:23.5px;font-weight:400;font-style:normal;color:#8791a7;-webkit-text-stroke:0.3px #8791a7;letter-spacing:0.402px;left:2269.0px;top:769.3px;'>Dates</span>
<span class='tx' style='font-family:"Liberation Sans", Arial, sans-serif;font-size:27.5px;font-weight:700;font-style:normal;color:#0b0c14;letter-spacing:0.039px;left:2220.8px;top:832.0px;'>by linking information from</span>
<span class='tx' style='font-family:"Liberation Sans", Arial, sans-serif;font-size:28.5px;font-weight:400;font-style:normal;color:#0b0c14;letter-spacing:0.007px;left:2220.8px;top:887.9px;'><i>Sales</i> and <i>Stores</i> tables using</span>
<span class='tx' style='font-family:"Liberation Sans", Arial, sans-serif;font-size:28.5px;font-weight:400;font-style:normal;color:#0b0c14;letter-spacing:-0.120px;left:2220.8px;top:928.0px;'><i>Store_Key - Store_Key</i> relation and</span>
<span class='tx' style='font-family:"Liberation Sans", Arial, sans-serif;font-size:28.5px;font-weight:400;font-style:normal;color:#0b0c14;letter-spacing:0.027px;left:2220.8px;top:967.6px;'><i>Sales</i> and <i>Dates</i> tables using</span>
<span class='tx' style='font-family:"Liberation Sans", Arial, sans-serif;font-size:28.5px;font-weight:400;font-style:normal;color:#0b0c14;letter-spacing:-0.143px;left:2220.8px;top:1007.3px;'><i>Date_Key - Date_Key</i> relation</span>
<span class='tx' style='font-family:"Liberation Sans", Arial, sans-serif;font-size:28.5px;font-weight:400;font-style:normal;color:#1449e0;-webkit-text-stroke:0.25px #1449e0;letter-spacing:-0.115px;left:2260.5px;top:1115.8px;'>Query visualizer</span>
<span class='tx' style='font-family:"Liberation Sans", Arial, sans-serif;font-size:28.5px;font-weight:400;font-style:normal;color:#1449e0;-webkit-text-stroke:0.25px #1449e0;letter-spacing:-0.520px;left:2260.5px;top:1203.7px;'>Query SQL</span>
</div>
</body>
</html>
